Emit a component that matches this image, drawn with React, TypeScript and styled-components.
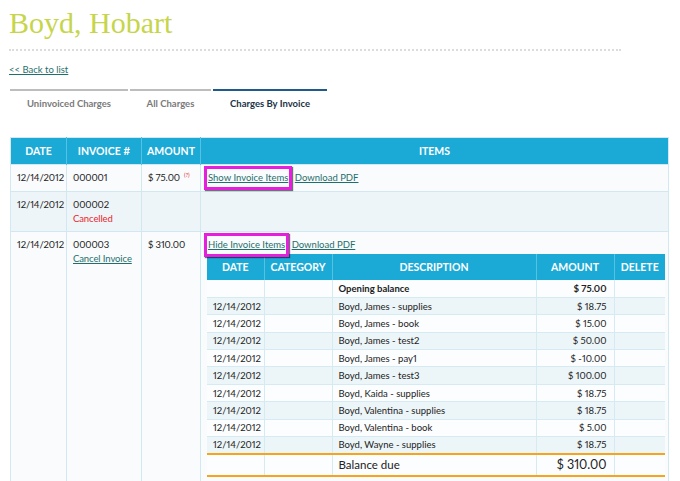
import React from "react";
import styled, { createGlobalStyle } from "styled-components";

const Global = createGlobalStyle`
  html, body { margin: 0; padding: 0; background: #ffffff; }
  body {
    font-family: Lato, "Open Sans", sans-serif;
    font-size: 9.5px;
    color: #222;
    font-variant-numeric: proportional-nums;
  }
  * { box-sizing: border-box; }
`;

const Page = styled.div`
  padding: 6px 0 0 9px;
  width: 680px;
`;

const Title = styled.h1`
  margin: 0;
  font-family: "Liberation Serif", serif;
  font-weight: normal;
  font-size: 30px;
  line-height: 34px;
  color: #c6d54a;
`;

const Divider = styled.div`
  width: 612px;
  margin-top: 9px;
  border-top: 2px dotted #dcdcdc;
`;

const BackLink = styled.a`
  display: inline-block;
  margin-top: 12px;
  font-size: 9.5px;
  line-height: 14px;
  color: #1f6f6c;
  text-decoration: underline;
`;

const Tabs = styled.div`
  display: flex;
  gap: 2px;
  margin: 12px 0 0 1px;
`;

const Tab = styled.div<{ $w: number; $active?: boolean }>`
  width: ${(p) => p.$w}px;
  border-top: 2px solid ${(p) => (p.$active ? "#1e5b8b" : "#bdbdbd")};
  padding: 6px 0;
  text-align: center;
  font-weight: 700;
  font-size: 9.5px;
  line-height: 14px;
  color: ${(p) => (p.$active ? "#1c3346" : "#7a7a7a")};
`;

const Outer = styled.table`
  margin: 20px 0 0 1px;
  width: 659px;
  border-collapse: collapse;
  table-layout: fixed;
  border: 1px solid #d2e9f2;
`;

const HeadCell = styled.th<{ $w?: number }>`
  ${(p) => (p.$w ? `width: ${p.$w}px;` : "")}
  background: #1ba9d6;
  color: #ffffff;
  font-weight: 700;
  font-size: 10.5px;
  height: 27px;
  padding: 0;
  text-align: center;
  border-left: 1px solid #55c1e3;
  &:first-child { border-left: none; }
`;

const Row = styled.tr<{ $alt?: boolean }>`
  background: ${(p) => (p.$alt ? "#eef5f8" : "#f9fbfd")};
  border-top: 1px solid #d2e8f1;
`;

const Cell = styled.td`
  vertical-align: top;
  padding: 6px 4px 5px 6px;
  line-height: 14px;
  white-space: nowrap;
  letter-spacing: -0.1px;
  border-left: 1px solid #d2e8f1;
  &:first-child { border-left: none; }
`;

const ItemsCell = styled(Cell)<{ $expanded?: boolean }>`
  padding: 6px 5px ${(p) => (p.$expanded ? "12px" : "5px")} 6px;
  letter-spacing: 0;
`;

const Cancelled = styled.div`
  color: #e8262c;
`;

const TealLink = styled.a`
  color: #1f6f6c;
  text-decoration: underline;
`;

const ToggleLink = styled.a`
  display: inline-block;
  color: #1f6f6c;
  text-decoration: underline;
  border: 3px solid #e61fdc;
  padding: 2px 1px;
  margin: -5px 0 -4px -3px;
  line-height: 14px;
  box-shadow: 1px 1px 1px rgba(0, 0, 0, 0.55);
`;

const Note = styled.sup`
  color: #e8262c;
  font-size: 6px;
  line-height: 0;
  margin-left: 4px;
  vertical-align: 4px;
`;

const Inner = styled.table`
  margin-top: 1px;
  width: 458px;
  border-collapse: collapse;
  table-layout: fixed;
`;

const InnerHead = styled.th<{ $w?: number }>`
  ${(p) => (p.$w ? `width: ${p.$w}px;` : "")}
  background: #1ba9d6;
  color: #ffffff;
  font-weight: 700;
  font-size: 10.5px;
  height: 26px;
  padding: 0;
  text-align: center;
  border-left: 1px solid #55c1e3;
  &:first-child { border-left: none; }
`;

const InnerRow = styled.tr<{ $alt?: boolean }>`
  background: ${(p) => (p.$alt ? "#ecf5f8" : "#fbfdfe")};
  border-bottom: 1px solid #d5eaf2;
`;

const InnerCell = styled.td<{ $right?: boolean; $bold?: boolean }>`
  height: 17.4px;
  padding: 0 7px 0 6px;
  line-height: 13px;
  font-size: 9.5px;
  white-space: nowrap;
  text-align: ${(p) => (p.$right ? "right" : "left")};
  font-weight: ${(p) => (p.$bold ? 700 : 400)};
  border-left: 1px solid #d5eaf2;
  &:first-child { border-left: none; }
`;

const TotalRow = styled.tr`
  background: #fbfdfe;
  border-top: 2px solid #f5a41c;
  border-bottom: 2px solid #f5a41c;
`;

const TotalCell = styled.td<{ $right?: boolean }>`
  height: 22px;
  padding: 0 7px 0 6px;
  font-size: ${(p) => (p.$right ? "12.5px" : "11.5px")};
  text-align: ${(p) => (p.$right ? "right" : "left")};
  border-left: 1px solid #d5eaf2;
  &:first-child { border-left: none; }
`;

type Item = { date: string; desc: string; amt: string; bold?: boolean };

const items: Item[] = [
  { date: "", desc: "Opening balance", amt: "$ 75.00", bold: true },
  { date: "12/14/2012", desc: "Boyd, James - supplies", amt: "$ 18.75" },
  { date: "12/14/2012", desc: "Boyd, James - book", amt: "$ 15.00" },
  { date: "12/14/2012", desc: "Boyd, James - test2", amt: "$ 50.00" },
  { date: "12/14/2012", desc: "Boyd, James - pay1", amt: "$ -10.00" },
  { date: "12/14/2012", desc: "Boyd, James - test3", amt: "$ 100.00" },
  { date: "12/14/2012", desc: "Boyd, Kaida - supplies", amt: "$ 18.75" },
  { date: "12/14/2012", desc: "Boyd, Valentina - supplies", amt: "$ 18.75" },
  { date: "12/14/2012", desc: "Boyd, Valentina - book", amt: "$ 5.00" },
  { date: "12/14/2012", desc: "Boyd, Wayne - supplies", amt: "$ 18.75" },
];

export default function App() {
  return (
    <Page>
      <Global />
      <Title>Boyd, Hobart</Title>
      <Divider />
      <BackLink href="#">&lt;&lt; Back to list</BackLink>
      <Tabs>
        <Tab $w={118}>Uninvoiced Charges</Tab>
        <Tab $w={81}>All Charges</Tab>
        <Tab $w={114} $active>
          Charges By Invoice
        </Tab>
      </Tabs>
      <Outer>
        <thead>
          <tr>
            <HeadCell $w={56}>DATE</HeadCell>
            <HeadCell $w={75}>INVOICE #</HeadCell>
            <HeadCell $w={59}>AMOUNT</HeadCell>
            <HeadCell>ITEMS</HeadCell>
          </tr>
        </thead>
        <tbody>
          <Row>
            <Cell>12/14/2012</Cell>
            <Cell>000001</Cell>
            <Cell>
              $ 75.00<Note>(?)</Note>
            </Cell>
            <ItemsCell>
              <ToggleLink href="#">Show Invoice Items</ToggleLink>{" "}
              <TealLink href="#">Download PDF</TealLink>
            </ItemsCell>
          </Row>
          <Row $alt>
            <Cell>12/14/2012</Cell>
            <Cell>
              000002
              <Cancelled>Cancelled</Cancelled>
            </Cell>
            <Cell />
            <Cell />
          </Row>
          <Row>
            <Cell>12/14/2012</Cell>
            <Cell>
              000003
              <div>
                <TealLink href="#">Cancel Invoice</TealLink>
              </div>
            </Cell>
            <Cell>$ 310.00</Cell>
            <ItemsCell $expanded>
              <ToggleLink href="#">Hide Invoice Items</ToggleLink>{" "}
              <TealLink href="#">Download PDF</TealLink>
              <Inner>
                <thead>
                  <tr>
                    <InnerHead $w={57}>DATE</InnerHead>
                    <InnerHead $w={68}>CATEGORY</InnerHead>
                    <InnerHead $w={204}>DESCRIPTION</InnerHead>
                    <InnerHead $w={78}>AMOUNT</InnerHead>
                    <InnerHead>DELETE</InnerHead>
                  </tr>
                </thead>
                <tbody>
                  {items.map((it, i) => (
                    <InnerRow key={i} $alt={i % 2 === 1}>
                      <InnerCell>{it.date}</InnerCell>
                      <InnerCell />
                      <InnerCell $bold={it.bold}>{it.desc}</InnerCell>
                      <InnerCell $right $bold={it.bold}>
                        {it.amt}
                      </InnerCell>
                      <InnerCell />
                    </InnerRow>
                  ))}
                  <TotalRow>
                    <TotalCell />
                    <TotalCell />
                    <TotalCell>Balance due</TotalCell>
                    <TotalCell $right>$ 310.00</TotalCell>
                    <TotalCell />
                  </TotalRow>
                </tbody>
              </Inner>
            </ItemsCell>
          </Row>
        </tbody>
      </Outer>
    </Page>
  );
}
